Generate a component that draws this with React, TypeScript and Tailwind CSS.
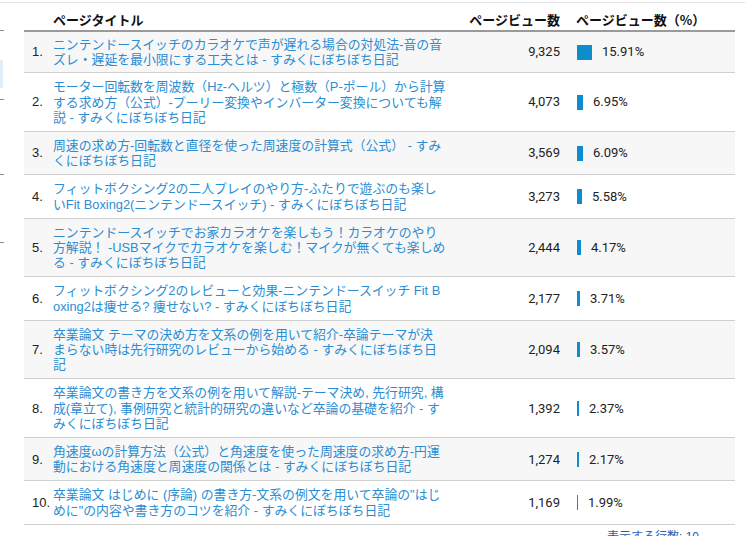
import React from "react";

const rows = [
  {
    lines: [
      "ニンテンドースイッチのカラオケで声が遅れる場合の対処法-音の音",
      "ズレ・遅延を最小限にする工夫とは - すみくにぼちぼち日記",
    ],
    views: "9,325",
    pct: 15.91,
  },
  {
    lines: [
      "モーター回転数を周波数（Hz-ヘルツ）と極数（P-ポール）から計算",
      "する求め方（公式）-プーリー変換やインバーター変換についても解",
      "説 - すみくにぼちぼち日記",
    ],
    views: "4,073",
    pct: 6.95,
  },
  {
    lines: [
      "周速の求め方-回転数と直径を使った周速度の計算式（公式） - すみ",
      "くにぼちぼち日記",
    ],
    views: "3,569",
    pct: 6.09,
  },
  {
    lines: [
      "フィットボクシング2の二人プレイのやり方-ふたりで遊ぶのも楽し",
      "いFit Boxing2(ニンテンドースイッチ) - すみくにぼちぼち日記",
    ],
    views: "3,273",
    pct: 5.58,
  },
  {
    lines: [
      "ニンテンドースイッチでお家カラオケを楽しもう！カラオケのやり",
      "方解説！ -USBマイクでカラオケを楽しむ！マイクが無くても楽しめ",
      "る - すみくにぼちぼち日記",
    ],
    views: "2,444",
    pct: 4.17,
  },
  {
    lines: [
      "フィットボクシング2のレビューと効果-ニンテンドースイッチ Fit B",
      "oxing2は痩せる? 痩せない? - すみくにぼちぼち日記",
    ],
    views: "2,177",
    pct: 3.71,
  },
  {
    lines: [
      "卒業論文 テーマの決め方を文系の例を用いて紹介-卒論テーマが決",
      "まらない時は先行研究のレビューから始める - すみくにぼちぼち日",
      "記",
    ],
    views: "2,094",
    pct: 3.57,
  },
  {
    lines: [
      "卒業論文の書き方を文系の例を用いて解説-テーマ決め, 先行研究, 構",
      "成(章立て), 事例研究と統計的研究の違いなど卒論の基礎を紹介 - す",
      "みくにぼちぼち日記",
    ],
    views: "1,392",
    pct: 2.37,
  },
  {
    lines: [
      "角速度ωの計算方法（公式）と角速度を使った周速度の求め方-円運",
      "動における角速度と周速度の関係とは - すみくにぼちぼち日記",
    ],
    views: "1,274",
    pct: 2.17,
  },
  {
    lines: [
      "卒業論文 はじめに (序論) の書き方-文系の例文を用いて卒論の\"はじ",
      "めに\"の内容や書き方のコツを紹介 - すみくにぼちぼち日記",
    ],
    views: "1,169",
    pct: 1.99,
  },
];

export default function App() {
  return (
    <div className="w-[745px] h-[536px] overflow-hidden bg-white pt-[2px] font-['Liberation_Sans','Noto_Sans_CJK_JP',sans-serif]">
      <div className="border-t border-[#e2e2e2] flex">
        {/* sidebar edge */}
        <div className="w-[24px] shrink-0">
          <div className="mt-[27px] w-[4px] h-px bg-[#8c8c8c]" />
          <div className="mt-[29px] w-[3px] h-[28px] bg-[#e1eef7]" />
          <div className="mt-[11px] w-[4px] h-px bg-[#8c8c8c]" />
          <div className="mt-[74px] w-[4px] h-px bg-[#8c8c8c]" />
          <div className="mt-[67px] w-[4px] h-px bg-[#8c8c8c]" />
        </div>

        <div className="w-[711px]">
          <table className="w-full border-collapse table-fixed">
            <colgroup>
              <col className="w-[29px]" />
              <col className="w-[400px]" />
              <col className="w-[107px]" />
              <col />
            </colgroup>
            <thead>
              <tr className="border-b-2 border-[#9a9a9a] text-[13px] font-bold text-[#111] leading-[15px] font-['Noto_Sans_CJK_JP',sans-serif]">
                <th />
                <th className="text-left pt-[9px] pb-[3px] font-bold">ページタイトル</th>
                <th className="text-right pt-[9px] pb-[3px] font-bold whitespace-nowrap">ページビュー数</th>
                <th className="text-left pl-[16px] pt-[9px] pb-[3px] font-bold whitespace-nowrap">ページビュー数（%）</th>
              </tr>
            </thead>
            <tbody>
              {rows.map((r, i) => (
                <tr
                  key={i}
                  className={
                    "border-b border-[#cfcfcf] " +
                    (i % 2 === 0 ? "bg-[#f7f7f7]" : "bg-white")
                  }
                >
                  <td className="pl-[8px] text-[13px] text-[#222] align-middle whitespace-nowrap">
                    {i + 1}.
                  </td>
                  <td
                    className={
                      "text-[12.85px] leading-[15.2px] text-[#2b8dd3] whitespace-nowrap align-middle " +
                      (i === 0 ? "py-[5px]" : "py-[6px]")
                    }
                  >
                    {r.lines.map((l, j) => (
                      <div key={j}>{l}</div>
                    ))}
                  </td>
                  <td className="text-right text-[13px] text-[#222] font-['Roboto',sans-serif] align-middle">
                    {r.views}
                  </td>
                  <td className="pl-[17px] align-middle">
                    <div className="flex items-center">
                      <div
                        className="h-[15px] bg-[#0e8ccc]"
                        style={{ width: Math.max(1, Math.floor(r.pct)) }}
                      />
                      <span className="ml-[10px] text-[13px] text-[#222] font-['Roboto',sans-serif]">
                        {r.pct.toFixed(2)}%
                      </span>
                    </div>
                  </td>
                </tr>
              ))}
            </tbody>
          </table>
          <div className="flex justify-end pr-[36px] pt-[5px] text-[12px] text-[#2a5db0] leading-[15px]">
            表示する行数: 10
          </div>
        </div>
      </div>
    </div>
  );
}
